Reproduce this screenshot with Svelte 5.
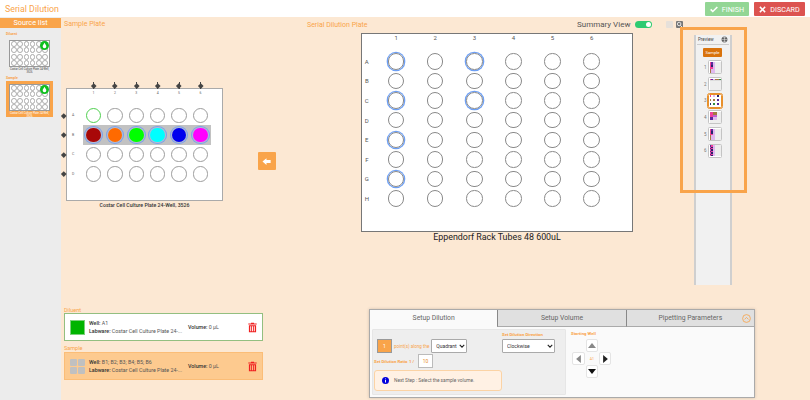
<script>
  const bigCols = [1, 2, 3, 4, 5, 6];
  const bigRows = ['A', 'B', 'C', 'D', 'E', 'F', 'G', 'H'];
  const bigMarked = new Set(['A1', 'A3', 'C1', 'C3', 'E1', 'G1']);
  const smallRows = ['A', 'B', 'C', 'D'];
  const bColors = ['#a80808', '#ff6a00', '#00ff00', '#00ffff', '#0000ee', '#ff00ff'];
  const miniWells = Array.from({ length: 24 });

  const pink = '#f0409a', purple = '#5a2a9a', brown = '#a57840', lav = '#e0b8f0', green = '#2f8f3f', navy = '#26266e';
  function cells(fn) {
    const out = [];
    for (let r = 0; r < 8; r++) for (let c = 0; c < 6; c++) out.push(fn(r, c) || '#eeeeee');
    return out;
  }
  const colPattern = (r, c) => {
    if (c === 0) return [pink, pink, pink, pink, pink, brown, brown, brown][r];
    if (c === 1) return [purple, purple, navy, navy, pink, lav, lav, lav][r];
    if (c === 2) return lav;
    return null;
  };
  const thumbs = [
    { n: 1, cells: cells(colPattern) },
    { n: 2, cells: cells((r, c) => (r === 0 ? [pink, purple, lav, brown, brown, green][c] : r === 1 ? '#dddddd' : null)) },
    { n: 3, active: true, cells: cells((r, c) => {
      if ((r === 0 || r === 3 || r === 6) && c % 2 === 0) return [[pink, lav, navy], [brown, brown, purple], [navy, green, purple]][r / 3][c / 2];
      return '#ffffff';
    }) },
    { n: 4, cells: cells((r, c) => {
      if (r < 2) return c < 2 ? pink : c < 4 ? brown : null;
      if (r < 4) return c < 2 ? pink : c < 4 ? '#c060d0' : null;
      if (r < 6) return c < 2 ? purple : c < 4 ? lav : null;
      return null;
    }) },
    { n: 5, cells: cells(colPattern) },
    { n: 6, cells: cells((r, c) => (c === 0 ? [purple, pink, purple, pink, purple, pink, purple, pink][r] : c === 1 ? (r % 2 ? navy : pink) : c === 2 ? lav : null)) }
  ];
</script>

{#snippet mini()}
  <div class="mini">
    {#each miniWells as _}<span></span>{/each}
    <b class="badge"><svg viewBox="0 0 10 10" width="7" height="7"><path d="M5 1 C6 3 7.6 4.6 7.6 6.4 A2.6 2.6 0 0 1 2.4 6.4 C2.4 4.6 4 3 5 1Z" fill="#fff"/></svg></b>
  </div>
{/snippet}

{#snippet trash()}
  <svg class="trash" viewBox="0 0 12 14" width="9" height="11"><path d="M4 1.5V.6h4v.9h3.6v1.6H.4V1.5zM1.2 4h9.6v9.4H1.2zM3 5.4v6.6h1.2V5.4zm2.4 0v6.6h1.2V5.4zm2.4 0v6.6H9V5.4z" fill="#f02020" fill-rule="evenodd"/></svg>
{/snippet}

{#snippet chevron()}
  <svg class="chev" viewBox="0 0 8 5" width="6" height="4"><path d="M1 1l3 3 3-3" fill="none" stroke="#222" stroke-width="1.5"/></svg>
{/snippet}

<div class="app">
  <header>
    <h1>Serial Dilution</h1>
    <div class="actions">
      <button class="finish"><svg viewBox="0 0 12 12" width="8" height="8"><path d="M1 6.5l3.2 3.2L11 3" fill="none" stroke="#fff" stroke-width="2.4"/></svg>FINISH</button>
      <button class="discard"><svg viewBox="0 0 12 12" width="7" height="7"><path d="M1.5 1.5l9 9M10.5 1.5l-9 9" fill="none" stroke="#fff" stroke-width="2.6"/></svg>DISCARD</button>
    </div>
  </header>

  <div class="body">
    <aside>
      <div class="src-title">Source list</div>
      <div class="src-label">Diluent</div>
      <div class="src-item">
        {@render mini()}
        <div class="src-cap">Costar Cell Culture Plate 24-Well, 3526</div>
      </div>
      <div class="src-label second">Sample</div>
      <div class="src-item picked">
        {@render mini()}
        <div class="src-cap">Costar Cell Culture Plate 24-Well, 3526</div>
      </div>
    </aside>

    <main>
      <div class="top">
        <section class="col-a">
          <div class="label">Sample Plate</div>
          <div class="sample-row">
            <div>
              <div class="splate">
                <span class="band"></span>
                <span></span>
                {#each bigCols as c}<span class="shead">{c}</span>{/each}
                {#each smallRows as r}
                  <span class="srow">{r}</span>
                  {#each bigCols as c, i}
                    <span class="scell">
                      {#if r === 'B'}
                        <i class="swell filled" style="background:{bColors[i]}"></i>
                      {:else}
                        <i class="swell" class:green={r === 'A' && c === 1}></i>
                      {/if}
                    </span>
                  {/each}
                {/each}
              </div>
              <div class="scap">Costar Cell Culture Plate 24-Well, 3526</div>
            </div>
            <button class="arrow" aria-label="Back">
              <svg viewBox="0 0 12 12" width="9" height="9"><path d="M6 1.5v2.6h5.5v3.8H6v2.6L.6 6z" fill="#fff"/></svg>
            </button>
          </div>
        </section>

        <section class="col-b">
          <div class="b-head">
            <div class="label">Serial Dilution Plate</div>
            <div class="summary">Summary View</div>
            <span class="toggle"><i></i></span>
            <span class="tool light"></span>
            <span class="tool dark"><svg viewBox="0 0 8 8" width="7" height="7"><circle cx="3.6" cy="3.4" r="2" fill="none" stroke="#fff" stroke-width=".9"/><path d="M5 5l2 2" stroke="#fff" stroke-width="1"/></svg></span>
          </div>
          <div class="bplate">
            <span></span>
            {#each bigCols as c}<span class="bhead">{c}</span>{/each}
            {#each bigRows as r}
              <span class="brow">{r}</span>
              {#each bigCols as c}
                <span class="bcell"><i class="bwell" class:mark={bigMarked.has(r + c)}></i></span>
              {/each}
            {/each}
          </div>
          <div class="bcap">Eppendorf Rack Tubes 48 600uL</div>
        </section>

        <section class="preview">
          <div class="pv-head">
            <span>Preview</span>
            <svg viewBox="0 0 12 12" width="7" height="7"><circle cx="6" cy="6" r="5" fill="#555"/><path d="M6 1v10M1 6h10M2.5 3h7M2.5 9h7" stroke="#eee" stroke-width=".9"/></svg>
          </div>
          <div class="pv-sample">Sample</div>
          {#each thumbs as t}
            <div class="pv-row">
              <span class="pv-n">{t.n}</span>
              <div class="thumb" class:active={t.active}>
                {#each t.cells as col}<i style="background:{col}"></i>{/each}
              </div>
            </div>
          {/each}
        </section>
        <div class="frame"></div>
      </div>

      <div class="bottom">
        <section class="cards">
          <div class="clabel">Diluent</div>
          <div class="card white">
            <span class="swatch"></span>
            <div class="ctext">
              <div><b>Well:</b> A1</div>
              <div><b>Labware:</b> Costar Cell Culture Plate 24-...</div>
            </div>
            <div class="cvol"><b>Volume:</b> 0 µL</div>
            {@render trash()}
          </div>
          <div class="clabel s2">Sample</div>
          <div class="card peach">
            <span class="quad"><i></i><i></i><i></i><i></i></span>
            <div class="ctext">
              <div><b>Well:</b> B1; B2; B3; B4; B5; B6</div>
              <div><b>Labware:</b> Costar Cell Culture Plate 24-...</div>
            </div>
            <div class="cvol"><b>Volume:</b> 0 µL</div>
            {@render trash()}
          </div>
        </section>

        <section class="panel">
          <div class="tabs">
            <div class="tab on">Setup Dilution</div>
            <div class="tab">Setup Volume</div>
            <div class="tab last">Pipetting Parameters
              <svg class="collapse" viewBox="0 0 12 12" width="9" height="9"><circle cx="6" cy="6" r="5.2" fill="none" stroke="#f9a44a" stroke-width="1.1"/><path d="M3.4 7.2l2.6-2.6 2.6 2.6" fill="none" stroke="#f9a44a" stroke-width="1.1"/></svg>
            </div>
          </div>
          <div class="pbody">
            <div class="setup">
              <div class="setup-left">
                <div class="line first">
                  <span class="num">1</span>
                  <span class="olabel">point(s) along the</span>
                  <span class="selwrap q"><select class="sel"><option>Quadrant</option></select>{@render chevron()}</span>
                </div>
                <div class="line ratio">
                  <span class="olabel b rl">Set Dilution Ratio</span>
                  <span class="olabel b one">1 /</span>
                  <span class="ratio-in">10</span>
                </div>
                <div class="info">
                  <svg viewBox="0 0 12 12" width="7" height="7"><circle cx="6" cy="6" r="6" fill="#0000dd"/><path d="M5.2 2.4h1.6v1.5H5.2zM5.2 5h1.6v4.6H5.2z" fill="#fff"/></svg>
                  <span>Next Step : Select the sample volume.</span>
                </div>
              </div>
              <div class="setup-right">
                <div class="olabel b">Set Dilution Direction</div>
                <span class="selwrap d"><select class="sel"><option>Clockwise</option></select>{@render chevron()}</span>
              </div>
            </div>
            <div class="start">
              <div class="olabel b">Starting Well</div>
              <div class="pad">
                <span class="pk up"><svg viewBox="0 0 10 6" width="8" height="5"><path d="M5 0l5 6H0z" fill="#888"/></svg></span>
                <span class="pk lf"><svg viewBox="0 0 6 10" width="5" height="8"><path d="M0 5l6-5v10z" fill="#888"/></svg></span>
                <span class="a1">A1</span>
                <span class="pk rt"><svg viewBox="0 0 6 10" width="5" height="8"><path d="M6 5L0 0v10z" fill="#222"/></svg></span>
                <span class="pk dn"><svg viewBox="0 0 10 6" width="8" height="5"><path d="M5 6l5-6H0z" fill="#111"/></svg></span>
              </div>
            </div>
          </div>
        </section>
      </div>
    </main>
  </div>
</div>

<style>
  :global(body) { margin: 0; background: #fce8d3; font-family: Roboto, "Liberation Sans", sans-serif; overflow: hidden; }
  .app { width: 810px; height: 400px; overflow: hidden; }
  * { box-sizing: border-box; }
  header { height: 17px; background: #fff; display: flex; align-items: center; justify-content: space-between; padding: 0 5px; }
  h1 { margin: 0; font-size: 8.8px; font-weight: 400; color: #f9a44a; }
  .actions { display: flex; gap: 5px; }
  button { border: 0; padding: 0; font-family: inherit; }
  .actions button { height: 14px; margin-top: 1px; color: #fff; font-size: 7.2px; display: flex; align-items: center; justify-content: center; gap: 4px; border-radius: 1px; }
  .finish { width: 44px; background: #93d695; }
  .discard { width: 51px; background: #dc5350; }

  .body { display: flex; height: 383px; }
  aside { width: 61px; background: #ececec; flex: none; padding-top: 1px; }
  .src-title { height: 10px; background: #f9a44a; color: #fff; font-size: 7.3px; line-height: 10px; text-align: center; margin-bottom: 4px; }
  .src-label { font-size: 3.5px; font-weight: 700; color: #f9a44a; padding-left: 6px; height: 7px; line-height: 5px; }
  .src-label.second { margin-top: 3px; height: 5px; line-height: 5px; }
  .src-item { margin: 0 8px 0 6px; padding: 3px 3px 1px; width: 47px; height: 36px; }
  .src-item.picked { background: #f9a44a; }
  .src-item:not(.picked) { margin-top: -2px; }
  .mini { position: relative; width: 41px; height: 27px; background: #fff; border: 1px solid #999; display: grid; grid-template-columns: repeat(6, 1fr); grid-template-rows: repeat(4, 1fr); padding: 0 1px; place-items: center; }
  .mini span { width: 5.8px; height: 5.8px; border-radius: 50%; border: .6px solid #aaa; }
  .badge { position: absolute; right: .5px; top: 0; width: 9px; height: 9px; border-radius: 50%; background: #0fbf1f; display: flex; align-items: center; justify-content: center; }
  .src-cap { font-size: 2.7px; line-height: 3.4px; text-align: center; color: #444; padding-top: 1px; }
  .picked .src-cap { color: #fff; }

  main { flex: 1; min-width: 0; }
  .top { position: relative; display: flex; height: 291px; }
  .label { font-size: 7px; color: #f9a44a; }
  .col-a { width: 246px; flex: none; padding: 3px 0 0 3px; }
  .sample-row { display: flex; margin-top: 60px; margin-left: 2px; }
  .splate { position: relative; width: 157px; height: 113px; background: #fff; border: 1.5px solid #aaa; display: grid; grid-template-columns: 15.8px repeat(6, 21.4px); grid-template-rows: 16.6px repeat(4, 19.5px); align-content: start; }
  .band { position: absolute; grid-area: 3 / 2 / 4 / 8; inset: 0; background: #c2c2c2; }
  .shead { position: relative; font-size: 3.5px; color: #666; text-align: center; padding-top: 2px; }
  .shead::before { content: ""; position: absolute; left: 50%; top: -5px; width: 3.5px; height: 3.5px; margin-left: -1.75px; background: #444; transform: rotate(45deg); }
  .shead::after { content: ""; position: absolute; left: 50%; top: -7px; width: 1px; height: 7px; margin-left: -.5px; background: #444; }
  .srow { position: relative; font-size: 3.5px; color: #666; display: flex; align-items: center; padding-left: 5px; }
  .srow::before { content: ""; position: absolute; left: -5.5px; top: 50%; width: 3.5px; height: 3.5px; margin-top: -1.75px; background: #444; transform: rotate(45deg); }
  .scell { position: relative; display: flex; align-items: center; justify-content: center; }
  .swell { display: block; width: 15.5px; height: 15.5px; border-radius: 50%; border: 1px solid #9d9d9d; background: #fff; }
  .swell.green { border-color: #4fd04f; }
  .swell.filled { border: 0; box-shadow: 0 0 0 1px #b5bcd0, 0 0 0 2px #7aa0ec; width: 14.5px; height: 14.5px; }
  .scap { width: 157px; text-align: center; font-size: 5.2px; font-weight: 500; color: #333; padding-top: 1px; }
  .arrow { width: 17.5px; height: 18px; margin: 64px 0 0 35px; background: #f9a44a; border-radius: 1px; display: flex; align-items: center; justify-content: center; }

  .col-b { width: 387px; flex: none; padding-top: 3px; }
  .b-head { display: flex; align-items: center; height: 9px; }
  .b-head .label { width: 270px; }
  .summary { font-size: 8px; color: #555; width: 58px; }
  .toggle { width: 17px; height: 7px; border-radius: 4px; background: #2ecb71; position: relative; }
  .toggle i { position: absolute; right: 1px; top: 1px; width: 5px; height: 5px; border-radius: 50%; background: #fff; }
  .tool { width: 7px; height: 7px; border-radius: 1px; margin-left: 14px; display: flex; }
  .tool.light { background: #e6e0da; }
  .tool.dark { background: #777; margin-left: 3px; }
  .bplate { width: 272px; height: 199px; margin: 4px 0 0 54px; background: #fff; border: 1.5px solid #777; display: grid; grid-template-columns: 14.6px repeat(6, 39.1px); grid-template-rows: 17.6px repeat(8, 19.6px); align-content: start; }
  .bhead { font-size: 6px; color: #555; text-align: center; }
  .brow { font-size: 6px; color: #555; display: flex; align-items: center; justify-content: center; padding-right: 5px; }
  .bcell { display: flex; align-items: center; justify-content: center; }
  .bwell { display: block; width: 16.5px; height: 16.5px; border-radius: 50%; border: 1.2px solid #8a8a8a; }
  .bwell.mark { box-shadow: 0 0 0 1.3px #6ea0f5; }
  .bcap { width: 272px; margin-left: 54px; text-align: center; font-size: 8.9px; font-weight: 400; color: #222; }

  .preview { width: 38px; height: 250px; margin-top: 18px; background: #f1f1f1; border: 1px solid #cfcfcf; border-width: 0 2px; flex: none; padding: 0 1px; }
  .pv-head { display: flex; align-items: center; justify-content: space-between; height: 10px; font-size: 4.5px; color: #444; border-bottom: 1px solid #ccc; padding: 0 1px 0 1px; }
  .pv-sample { width: 19px; height: 9px; margin: 3px 0 2px 6px; background: #d9730d; color: #fff; font-size: 4.2px; line-height: 9px; text-align: center; border-radius: 1px; }
  .pv-row { display: flex; align-items: center; height: 16.7px; padding-left: 7px; }
  .pv-n { width: 4px; font-size: 4.5px; color: #777; }
  .thumb { width: 14px; height: 14px; border: 1px solid #c4c4c4; border-radius: 1.5px; background: #fff; display: grid; grid-template-columns: repeat(6, 1fr); grid-template-rows: repeat(8, 1fr); padding: .5px; }
  .thumb.active { border-color: #e8902c; outline: .7px solid #e8902c; }
  .thumb i { display: block; }
  .frame { position: absolute; left: 619px; top: 10px; width: 67px; height: 166px; border: 3px solid #f9a44a; pointer-events: none; }

  .bottom { display: flex; height: 92px; }
  .cards { width: 205px; padding-left: 3px; flex: none; }
  .clabel { font-size: 5.5px; color: #f9a44a; height: 6px; line-height: 6px; margin-top: -2px; padding-top: 1px; margin-bottom: 1px; }
  .clabel.s2 { margin-top: 4px; height: 7px; line-height: 7px; margin-bottom: 0; padding-top: 0; }
  .card { width: 199px; height: 28px; display: flex; align-items: center; padding: 0 5px 0 5px; color: #555; font-size: 5.3px; line-height: 8px; }
  .card b { color: #333; font-weight: 500; }
  .white { background: #fff; border: 1px solid #93bf80; margin-top: 1px; }
  .peach { background: #fdca8f; border: 1px solid #fbbd77; }
  .swatch { width: 15px; height: 15px; background: #00b400; border: 1px solid #7dd07d; flex: none; }
  .quad { width: 15px; height: 15px; display: grid; grid-template-columns: 1fr 1fr; gap: 1px; flex: none; }
  .quad i { background: #c0c0c0; border-radius: 1px; }
  .ctext { width: 99px; margin-left: 4px; flex: none; white-space: nowrap; }
  .cvol { flex: 1; white-space: nowrap; }
  .trash { flex: none; }

  .panel { width: 386px; height: 89px; margin: 1px 0 0 103px; background: #fafafa; border: 1px solid #aaa; box-shadow: 0 0 3px rgba(0,0,0,.18); }
  .tabs { display: flex; height: 17px; }
  .tab { position: relative; flex: 1; background: #e0e0e0; color: #666; font-size: 6.8px; line-height: 16px; text-align: center; border-bottom: 1px solid #aaa; border-left: 1px solid #888; }
  .tab.on { background: #fafafa; border-bottom: 0; border-left: 0; }
  .collapse { position: absolute; right: 3px; top: 4px; }
  .pbody { display: flex; padding: 2px 0 0 2px; }
  .setup { width: 194px; height: 66px; background: #eeeeee; border: 1px solid #e6e6e6; border-radius: 1px; display: flex; padding: 0 0 0 1px; }
  .setup-left { width: 128px; flex: none; }
  .setup-right { padding-top: 2px; }
  .line { display: flex; align-items: center; }
  .first { margin: 9px 0 0 3px; }
  .num { width: 15px; height: 14px; background: #f9a44a; border: 1px solid #999; color: #fff; font-size: 5px; line-height: 12px; text-align: center; flex: none; }
  .olabel { font-size: 4.5px; color: #f9a44a; margin-left: 2px; white-space: nowrap; }
  .olabel.b { font-weight: 700; margin-left: 0; font-size: 4.3px; }
  .rl { width: 34px; }
  .olabel.one { margin-left: 1px; width: 8px; }
  .selwrap { position: relative; display: block; height: 14px; flex: none; }
  .sel { appearance: none; display: block; width: 100%; height: 100%; font: 5px Roboto, sans-serif; background: #fff; border: 1px solid #aaa; border-radius: 1px; padding: 0 0 0 4px; margin: 0; color: #333; }
  .chev { position: absolute; right: 2px; top: 5px; }
  .q { width: 36px; margin-left: 2px; }
  .d { width: 53px; margin-top: 2px; }
  .ratio { margin-top: 1px; }
  .ratio-in { width: 15px; height: 14px; background: #fff; border: 1px solid #bbb; font-size: 5px; line-height: 12px; text-align: center; color: #e8902c; margin-left: 1px; flex: none; }
  .info { width: 128px; height: 21px; margin-top: 2px; background: #fff1e4; border: 1px solid #fbd3a5; border-radius: 3px; display: flex; align-items: center; gap: 5px; padding-left: 7px; font-size: 4.8px; color: #666; }
  .start { padding: 2px 0 0 5px; }
  .pad { display: grid; grid-template-columns: 13.3px 13.3px 13.3px; grid-template-rows: 13px 13px 13px; margin-top: 3px; margin-left: 1px; place-items: center; width: 40px; }
  .pk { width: 12.5px; height: 12.5px; background: #fff; border: 1px solid #e4e4e4; border-radius: 2px; display: flex; align-items: center; justify-content: center; }
  .up { grid-area: 1 / 2; }
  .lf { grid-area: 2 / 1; }
  .a1 { grid-area: 2 / 2; font-size: 3.6px; color: #f9a44a; }
  .rt { grid-area: 2 / 3; }
  .dn { grid-area: 3 / 2; }
</style>
